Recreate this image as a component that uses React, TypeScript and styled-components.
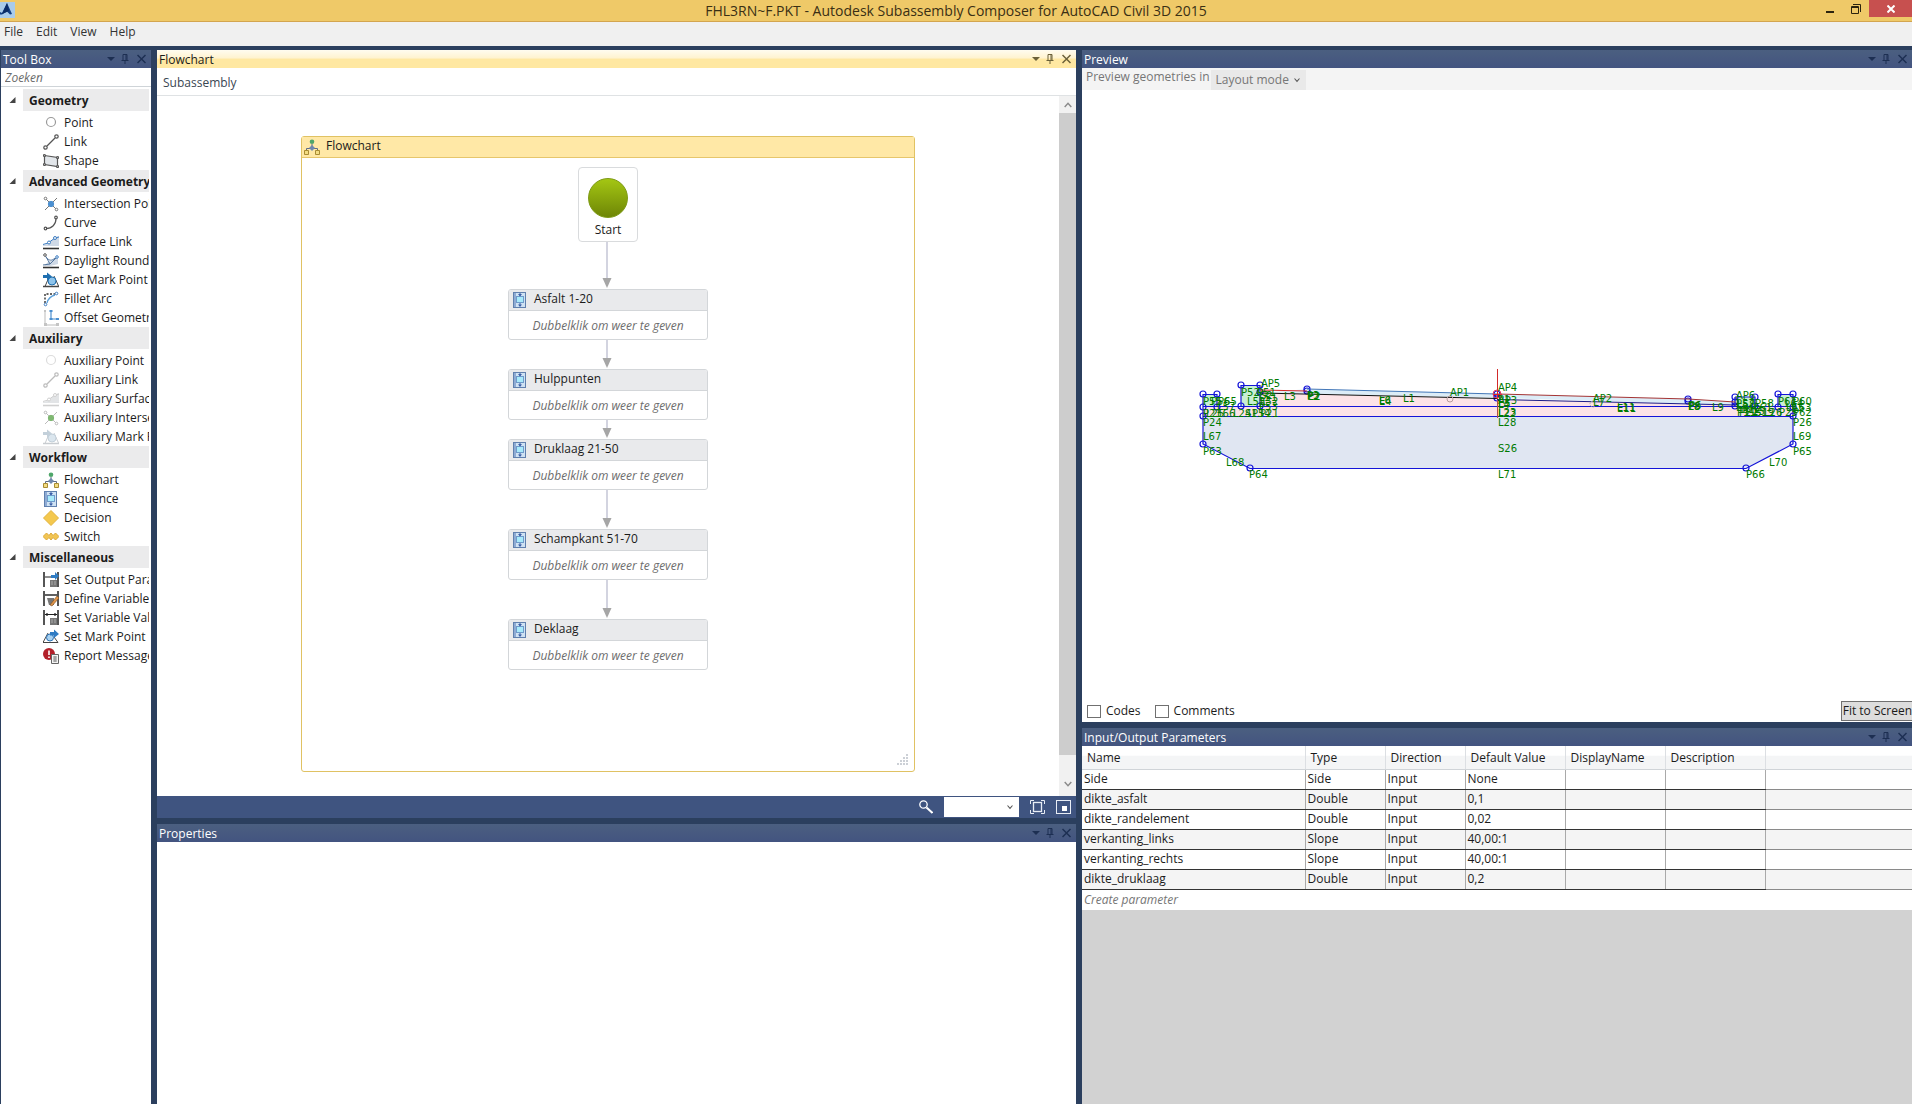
import React from "react";
import styled, { createGlobalStyle } from "styled-components";

const font = `"Open Sans", "Noto Sans", sans-serif`;

const GlobalStyle = createGlobalStyle`
  *, *::before, *::after { box-sizing: border-box; }
  body { margin: 0; background: #2b3f5e; font-family: ${font}; font-size: 12px; line-height: 16px; color: #1b1b1b; }
  button, input, select { font: inherit; color: inherit; margin: 0; }
  button { border: 0; padding: 0; background: none; text-align: left; }
  ul { list-style: none; margin: 0; padding: 0; }
  h1, h2, h3, p { margin: 0; font-weight: 400; font-size: inherit; }
`;

/* ---------- window frame ---------- */

const Window = styled.div`
  display: flex;
  flex-direction: column;
  height: 100vh;
  overflow: hidden;
`;

const TitleBar = styled.header`
  display: grid;
  grid-template-columns: 1fr auto 1fr;
  height: 22px;
  flex: none;
  background: #efc968;
  border-bottom: 1px solid #d3a54f;
`;

const Title = styled.h1`
  font-size: 14px;
  line-height: 21px;
  color: #3a2f14;
  white-space: nowrap;
`;

const WindowButtons = styled.div`
  display: flex;
  justify-content: flex-end;
`;

const WindowButton = styled.button<{ $close?: boolean }>`
  display: flex;
  align-items: center;
  justify-content: center;
  width: ${(p) => (p.$close ? 43 : 26)}px;
  height: 17px;
  background: ${(p) => (p.$close ? "#c7504f" : "transparent")};
`;

const MenuBar = styled.nav`
  display: flex;
  align-items: flex-start;
  gap: 13px;
  height: 24px;
  flex: none;
  padding: 2px 4px;
  background: #f0f0f0;
`;

const MenuItem = styled.button`
  color: #333;
`;

const Workspace = styled.main`
  flex: 1;
  min-height: 0;
  display: grid;
  grid-template-columns: 150px minmax(0, 919fr) minmax(0, 830fr);
  grid-template-rows: minmax(0, 1fr);
  gap: 6px;
  padding: 4px 0 0 1px;
  background: #2b3f5e;
`;

const Stack = styled.div`
  display: flex;
  flex-direction: column;
  gap: 6px;
  min-height: 0;
`;

const Panel = styled.section<{ $grow: number; $bg?: string }>`
  flex: ${(p) => p.$grow} 1 0;
  min-height: 0;
  min-width: 0;
  display: flex;
  flex-direction: column;
  background: ${(p) => p.$bg ?? "#fff"};
  overflow: hidden;
`;

const PanelHeader = styled.div<{ $active?: boolean }>`
  display: flex;
  align-items: center;
  height: 18px;
  flex: none;
  padding: 0 0 0 2px;
  color: ${(p) => (p.$active ? "#1b1b1b" : "#fff")};
  background: ${(p) =>
    p.$active
      ? "linear-gradient(#fffcf0 0%, #fff3cf 45%, #ffe8a2 50%, #ffe8a2 100%)"
      : "linear-gradient(#4b5f80, #435480)"};
`;

const PanelTitle = styled.h2`
  flex: 1;
  white-space: nowrap;
  padding-top: 2px;
`;

const PanelButton = styled.button<{ $wide?: boolean; $active?: boolean }>`
  display: flex;
  justify-content: center;
  width: ${(p) => (p.$wide ? 19 : 14)}px;
  color: ${(p) => (p.$active ? "#6b6038" : "#1d2f52")};
`;

function Header({ title, active }: { title: string; active?: boolean }) {
  return (
    <PanelHeader $active={active}>
      <PanelTitle>{title}</PanelTitle>
      <PanelButton $active={active} aria-label="Window position">
        <svg width="8" height="10" viewBox="0 0 8 10"><path d="M0 3h8L4 7z" fill="currentColor" /></svg>
      </PanelButton>
      <PanelButton $active={active} aria-label="Auto hide">
        <svg width="8" height="10" viewBox="0 0 8 10" fill="none" stroke="currentColor">
          <path d="M2 6V.5h4V6M0.500 6.500h7M4 6.500V10M5 1v5" />
        </svg>
      </PanelButton>
      <PanelButton $wide $active={active} aria-label="Close">
        <svg width="9" height="10" viewBox="0 0 9 10" fill="none" stroke="currentColor" strokeWidth="1.5">
          <path d="M.5 1l8 8M8.500 1l-8 8" />
        </svg>
      </PanelButton>
    </PanelHeader>
  );
}

const Chevron = ({ up, color = "#555", size = 8 }: { up?: boolean; color?: string; size?: number }) => (
  <svg width={size} height="6" viewBox="0 0 8 6" fill="none" stroke={color} strokeWidth="1.4">
    <path d={up ? "M.7 5L4 1.200 7.300 5" : "M.7 1L4 4.800 7.300 1"} />
  </svg>
);

/* ---------- icons ---------- */

const FlowIcon = () => (
  <>
    <path d="M8 5v3M2.500 12V9.500h11V12" stroke="#5d6c86" fill="none" />
    <circle cx="8" cy="2.700" r="2.300" fill="#4fa66a" />
    <path d="M8 6l3 3-3 3-3-3z" fill="#7088ae" />
    <path d="M.5 11.500h4v4h-4zM11.500 11.500h4v4h-4z" fill="#f3dc83" stroke="#a98c33" />
  </>
);

const SequenceIcon = () => (
  <>
    <rect x="1.500" y=".5" width="12" height="15" fill="#cfe2f3" stroke="#6080ae" />
    <path d="M2 1h2v14H2z" fill="#8fabd4" />
    <rect x="4.500" y="4.500" width="7" height="6" fill="#a9eafa" stroke="#6f9bcb" />
    <path d="M8 1v3M8 11v2" stroke="#3b5fa8" />
    <path d="M6 2h4L8 4.500zM6 12.500h4L8 15z" fill="#3b5fa8" />
  </>
);

const surface = (line: string, fill: string, base: string) => (
  <>
    <path d="M0 11l4-1 4-3 5-4 3-1v10H0z" fill={fill} />
    <path d="M0 14.500h16" stroke={base} strokeWidth="1.600" />
    <path d="M0 10.500L5 9l7-5 4-1" stroke={line} fill="none" />
    <circle cx="6" cy="8.500" r="1.500" fill="#fff" stroke={line} />
    <circle cx="12" cy="4" r="1.500" fill="#fff" stroke={line} />
  </>
);

const cross = (line: string, dot: string) => (
  <>
    <path d="M2 2l12 12M14 2L2 14" stroke={line} />
    <circle cx="2.500" cy="2.500" r="1.300" fill="#fff" stroke={line} />
    <circle cx="13.500" cy="13.500" r="1.300" fill="#fff" stroke={line} />
    <circle cx="8" cy="8" r="2.700" fill={dot} stroke={dot} />
  </>
);

const link = (c: string) => (
  <g stroke={c} fill="none" strokeWidth="1.200">
    <path d="M4 12l8-8" />
    <circle cx="2.500" cy="13.500" r="1.700" />
    <circle cx="13.500" cy="2.500" r="1.700" />
  </g>
);

const markPoint = (a: string, b: string, base: string) => (
  <>
    <path d="M2 14.500l3-7M11 4l4.500 10" stroke={base} />
    <circle cx="9" cy="9" r="4" fill={b} stroke={a} />
    <path d="M0 3h4V.5L9 4.500 4 8.500V6H0z" fill={a} />
    <path d="M0 14.500h16" stroke={base} strokeWidth="1.500" />
  </>
);

const bars = (
  <path d="M1 0v15M15 0v15" stroke="#1e1e1e" strokeWidth="1.500" />
);

const calc = (
  <>
    <path d="M7 8h7v7H7z" fill="#777" />
    <path d="M8.500 10h1M8.500 12h1M11.500 10h1M11.500 12h1" stroke="#ddd" />
  </>
);

const glyphs: Record<string, React.ReactNode> = {
  point: <circle cx="8" cy="7" r="4.500" fill="none" stroke="#9a9a9a" strokeWidth="1.200" />,
  link: link("#555"),
  shape: (
    <g stroke="#555" strokeWidth="1.200">
      <path d="M1.500 2.500l13 2v9l-13-2z" fill="#e2e6ea" />
      <circle cx="1.500" cy="2.500" r="1" fill="#fff" /><circle cx="14.500" cy="4.500" r="1" fill="#fff" />
      <circle cx="14.500" cy="13.500" r="1" fill="#fff" /><circle cx="1.500" cy="11.500" r="1" fill="#fff" />
    </g>
  ),
  intersection: cross("#777", "#4b8fd0"),
  curve: (
    <g stroke="#555" fill="none" strokeWidth="1.200">
      <path d="M3 13.500c6 0 10-4 10-10" /><circle cx="2.500" cy="13.500" r="1.300" /><circle cx="13" cy="2.500" r="1.300" />
    </g>
  ),
  surface: surface("#3d7dc2", "#cfd9e6", "#333"),
  daylight: (
    <>
      <path d="M5 9l10-5v7l-8 2H1z" fill="#cfd9e6" />
      <path d="M0 14.500h16" stroke="#333" strokeWidth="1.600" />
      <path d="M2 2l5 9 8-8M3 4c3 4 6 4 9 1M0 12l7-1" stroke="#54769e" fill="none" />
      <circle cx="2" cy="2" r="1.300" fill="#fff" stroke="#555" /><circle cx="14" cy="4" r="1.300" fill="#fff" stroke="#3d7dc2" />
    </>
  ),
  getmark: markPoint("#1e6fb0", "#8ec3ea", "#444"),
  fillet: (
    <>
      <path d="M2 12V3h10" stroke="#333" strokeDasharray="2 1.500" fill="none" strokeWidth="1.400" />
      <path d="M4 12c1-4 4-7 8-8" stroke="#5aa0dc" fill="none" strokeWidth="1.300" />
      <circle cx="2.500" cy="13.500" r="1.300" fill="#fff" stroke="#3d7dc2" /><circle cx="13.500" cy="2.500" r="1.300" fill="#fff" stroke="#3d7dc2" />
    </>
  ),
  offset: (
    <>
      <path d="M2 1v14h13" stroke="#bbb" fill="none" />
      <path d="M8 1v8h7" stroke="#4b8fd0" fill="none" strokeWidth="1.200" />
      <path d="M6.500 0h3v2h-3zM6.500 8h3v2h-3zM13 8h3v2h-3z" fill="#4b8fd0" />
      <path d="M1 0h2v2H1zM1 13h3v3H1zM13 13h3v3h-3z" fill="#c4c4c4" />
    </>
  ),
  auxpoint: <circle cx="8" cy="7" r="4.500" fill="none" stroke="#dcdcdc" strokeWidth="1.200" />,
  auxlink: link("#bcbcbc"),
  auxsurface: surface("#cfcfcf", "#e2e4e6", "#d0d0d0"),
  auxcross: cross("#bbb", "#7fb872"),
  auxmark: markPoint("#c3d0da", "#dbe6ee", "#c8ccd0"),
  flow: <FlowIcon />,
  sequence: <SequenceIcon />,
  decision: <path d="M8 .5L15.500 8 8 15.500.5 8z" fill="#f4c84e" stroke="#e2b23c" />,
  switch: (
    <path d="M0 7.500L3.500 4 6 6.500 8 4l2 2.500L12.500 4 16 7.500 12.500 11 10 8.500 8 11 6 8.500 3.500 11z" fill="#f2c553" stroke="#dba93a" />
  ),
  setoutput: (
    <>{bars}{calc}<path d="M2 5h7" stroke="#1e1e1e" /><path d="M8 3h4V0l4 4-4 4V6H8z" fill="#2f7cc4" /></>
  ),
  define: (
    <>{bars}<path d="M2 4h12" stroke="#1e1e1e" strokeWidth="1.400" /><path d="M4 7h7v7H6z" fill="#777" /><path d="M7 14l7-9 2 2-7 8z" fill="#e0954b" stroke="#7a4d1e" strokeWidth=".6" /></>
  ),
  setvalue: (
    <>{bars}{calc}<path d="M2 4.500h12M4 3v3M12 3v3" stroke="#1e1e1e" strokeWidth="1.200" /></>
  ),
  setmark: (
    <>
      <path d="M0 13.500L5 4M11 8l4 5.500H0" stroke="#444" fill="none" />
      <circle cx="7" cy="8.500" r="3.500" fill="#a8d2f2" stroke="#2a70b4" />
      <path d="M7 3h4V.5L16 5l-5 4V6.500H7z" fill="#2f7cc4" />
    </>
  ),
  report: (
    <>
      <circle cx="6" cy="6" r="6" fill="#b3202a" />
      <path d="M6 2.500v4.500M6 8.500v1.500" stroke="#fff" strokeWidth="1.600" />
      <path d="M8.500 6.500h7v9h-7z" fill="#f4f4f4" stroke="#666" />
      <path d="M10 9h4M10 11h4M10 13h4M12 8v6" stroke="#888" />
    </>
  ),
};

const Icon = styled.svg.attrs({ width: 16, height: 16, viewBox: "0 0 16 16" })`
  flex: none;
  display: block;
`;

/* ---------- tool box ---------- */

const SearchInput = styled.input`
  width: 100%;
  height: 19px;
  flex: none;
  padding: 1px 4px 0;
  border: 0;
  border-bottom: 1px solid #cfd4d8;
  outline: 0;
  font-style: italic;
  &::placeholder { color: #6b6b6b; opacity: 1; }
`;

const Tree = styled.div`
  padding: 2px 2px 0 8px;
  overflow: hidden;
`;

const GroupHeader = styled.button`
  display: flex;
  align-items: center;
  width: 100%;
  height: 22px;
`;

const GroupArrow = styled.svg`
  flex: none;
  width: 14px;
  height: 8px;
`;

const GroupTitle = styled.span`
  flex: 1;
  min-width: 0;
  height: 22px;
  padding: 4px 0 0 6px;
  background: #ebebec;
  font-weight: 700;
  white-space: nowrap;
  overflow: hidden;
`;

const ToolList = styled.ul`
  padding: 2px 0 0 34px;
`;

const Tool = styled.button`
  display: flex;
  align-items: center;
  gap: 5px;
  width: 100%;
  height: 19px;
  overflow: hidden;
  white-space: nowrap;
`;

const groups: [string, [string, string][]][] = [
  ["Geometry", [["point", "Point"], ["link", "Link"], ["shape", "Shape"]]],
  ["Advanced Geometry", [
    ["intersection", "Intersection Point"], ["curve", "Curve"], ["surface", "Surface Link"],
    ["daylight", "Daylight Rounding"], ["getmark", "Get Mark Point"], ["fillet", "Fillet Arc"], ["offset", "Offset Geometry"],
  ]],
  ["Auxiliary", [
    ["auxpoint", "Auxiliary Point"], ["auxlink", "Auxiliary Link"], ["auxsurface", "Auxiliary Surface Link"],
    ["auxcross", "Auxiliary Intersection"], ["auxmark", "Auxiliary Mark Point"],
  ]],
  ["Workflow", [["flow", "Flowchart"], ["sequence", "Sequence"], ["decision", "Decision"], ["switch", "Switch"]]],
  ["Miscellaneous", [
    ["setoutput", "Set Output Parameter"], ["define", "Define Variable"], ["setvalue", "Set Variable Value"],
    ["setmark", "Set Mark Point"], ["report", "Report Message"],
  ]],
];

function ToolBox() {
  return (
    <Panel $grow={1}>
      <Header title="Tool Box" />
      <SearchInput type="text" placeholder="Zoeken" aria-label="Zoeken" />
      <Tree>
        {groups.map(([name, tools]) => (
          <div key={name}>
            <GroupHeader aria-expanded="true">
              <GroupArrow viewBox="0 0 14 8"><path d="M6.500 1v6h-6z" fill="#444" /></GroupArrow>
              <GroupTitle>{name}</GroupTitle>
            </GroupHeader>
            <ToolList>
              {tools.map(([icon, label]) => (
                <li key={label}>
                  <Tool><Icon>{glyphs[icon]}</Icon>{label}</Tool>
                </li>
              ))}
            </ToolList>
          </div>
        ))}
      </Tree>
    </Panel>
  );
}

/* ---------- flowchart designer ---------- */

const Breadcrumb = styled.div`
  height: 28px;
  flex: none;
  padding: 7px 6px 0;
  border-bottom: 1px solid #dfe2e4;
`;

const Crumb = styled.button`
  display: block;
  color: #3a4652;
`;

const Designer = styled.div`
  flex: 1;
  min-height: 0;
  display: flex;
`;

const Canvas = styled.div`
  flex: 1;
  min-width: 0;
  display: flex;
  justify-content: center;
  align-items: flex-start;
  padding-top: 40px;
  overflow: hidden;
`;

const ScrollBar = styled.div`
  display: flex;
  flex-direction: column;
  width: 17px;
  background: #cdcdcd;
`;

const ScrollButton = styled.button<{ $end?: boolean }>`
  display: flex;
  align-items: center;
  justify-content: center;
  height: ${(p) => (p.$end ? 41 : 17)}px;
  padding-top: ${(p) => (p.$end ? 16 : 0)}px;
  margin-top: ${(p) => (p.$end ? "auto" : "0")};
  background: #f1f1f1;
`;

const Chart = styled.div`
  flex: none;
  width: 614px;
  border: 1px solid #e0c263;
  border-radius: 3px;
`;

const ChartHeader = styled.div`
  display: flex;
  align-items: center;
  gap: 6px;
  height: 21px;
  padding: 0 2px;
  border-bottom: 1px solid #e6c66c;
  background: #ffe8a6;
`;

const ChartTitle = styled.h3`
  padding-bottom: 2px;
`;

const Diagram = styled.div`
  position: relative;
  height: 613px;
`;

const Connectors = styled.svg`
  position: absolute;
  inset: 0;
  width: 100%;
  height: 100%;
`;

const StartNode = styled.div`
  position: absolute;
  left: 276px;
  top: 9px;
  display: flex;
  flex-direction: column;
  align-items: center;
  gap: 4px;
  width: 60px;
  height: 75px;
  padding-top: 10px;
  border: 1px solid #d9dbdd;
  border-radius: 4px;
  background: #fff;
`;

const StartDisc = styled.div`
  width: 40px;
  height: 40px;
  border-radius: 50%;
  border: 1px solid #7d9a14;
  background: linear-gradient(#a4c613, #6e8606);
`;

const ActivityBox = styled.article`
  position: absolute;
  left: 206px;
  width: 200px;
  height: 51px;
  border: 1px solid #d3d6d9;
  border-radius: 3px;
  background: #fff;
  overflow: hidden;
`;

const ActivityHead = styled.div`
  display: flex;
  align-items: center;
  gap: 6px;
  height: 21px;
  padding: 0 3px;
  border-bottom: 1px solid #d3d6d9;
  background: #e9eaec;
`;

const ActivityHint = styled.p`
  padding-top: 7px;
  text-align: center;
  font-style: italic;
  color: #6d6d6d;
`;

const Grip = styled.svg`
  position: absolute;
  right: 5px;
  bottom: 5px;
`;

const StatusBar = styled.div`
  display: flex;
  align-items: center;
  justify-content: flex-end;
  gap: 11px;
  height: 22px;
  flex: none;
  padding-right: 5px;
  background: #3f5480;
`;

const ToolButton = styled.button`
  display: flex;
`;

const SelectWrap = styled.label<{ $w: number; $bg: string; $color?: string }>`
  display: grid;
  grid-template-columns: 1fr 8px;
  align-items: center;
  width: ${(p) => p.$w}px;
  height: 20px;
  padding: 0 4px 0 5px;
  background: ${(p) => p.$bg};
  color: ${(p) => p.$color ?? "#1b1b1b"};
`;

const Select = styled.select`
  appearance: none;
  min-width: 0;
  height: 20px;
  border: 0;
  padding: 0;
  background: transparent;
  outline: 0;
`;

const activities: [string, number][] = [
  ["Asfalt 1-20", 131], ["Hulppunten", 211], ["Druklaag 21-50", 281], ["Schampkant 51-70", 371], ["Deklaag", 461],
];

const nodeHeight = 51;

function FlowchartPanel() {
  return (
    <Panel $grow={768}>
      <Header title="Flowchart" active />
      <Breadcrumb><Crumb>Subassembly</Crumb></Breadcrumb>
      <Designer>
        <Canvas>
          <Chart>
            <ChartHeader><Icon><FlowIcon /></Icon><ChartTitle>Flowchart</ChartTitle></ChartHeader>
            <Diagram>
              <Connectors>
                {activities.map(([name, y], i) => {
                  const from = i === 0 ? 84 : activities[i - 1][1] + nodeHeight;
                  return (
                    <g key={name}>
                      <path d={`M305 ${from}V${y - 8}`} stroke="#d3d4e0" strokeWidth="2" />
                      <path d={`M300.500 ${y - 11}h9l-4.500 10z`} fill="#a6a6a6" />
                    </g>
                  );
                })}
              </Connectors>
              <StartNode><StartDisc />Start</StartNode>
              {activities.map(([name, y]) => (
                <ActivityBox key={name} style={{ top: y }}>
                  <ActivityHead><Icon><SequenceIcon /></Icon><ChartTitle>{name}</ChartTitle></ActivityHead>
                  <ActivityHint>Dubbelklik om weer te geven</ActivityHint>
                </ActivityBox>
              ))}
              <Grip width="12" height="12" viewBox="0 0 12 12" fill="#ccd0d6">
                <path d="M9 0h2v2H9zM6 3h2v2H6zM9 3h2v2H9zM3 6h2v2H3zM6 6h2v2H6zM9 6h2v2H9zM0 9h2v2H0zM3 9h2v2H3zM6 9h2v2H6zM9 9h2v2H9z" />
              </Grip>
            </Diagram>
          </Chart>
        </Canvas>
        <ScrollBar>
          <ScrollButton aria-label="Scroll up"><Chevron up color="#8a8a8a" /></ScrollButton>
          <ScrollButton $end aria-label="Scroll down"><Chevron color="#8a8a8a" /></ScrollButton>
        </ScrollBar>
      </Designer>
      <StatusBar>
        <ToolButton aria-label="Zoom">
          <svg width="14" height="14" viewBox="0 0 14 14" fill="none" stroke="#fff">
            <circle cx="4.500" cy="4.500" r="3.700" strokeWidth="1.300" /><path d="M7.500 7.500l6 5.500" strokeWidth="2" />
          </svg>
        </ToolButton>
        <SelectWrap $w={75} $bg="#fff"><Select aria-label="Zoom level" defaultValue=""><option value="" /></Select><Chevron size={6} /></SelectWrap>
        <ToolButton aria-label="Fit to screen">
          <svg width="15" height="14" viewBox="0 0 15 14" fill="none" stroke="#e8edf5">
            <path d="M.5 4V.5H4M11 .5h3.500V4M14.500 10v3.500H11M4 13.500H.5V10" /><rect x="3.500" y="2.500" width="8" height="9" strokeWidth="1.300" />
          </svg>
        </ToolButton>
        <ToolButton aria-label="Overview">
          <svg width="15" height="14" viewBox="0 0 15 14">
            <rect x=".5" y=".5" width="14" height="13" fill="none" stroke="#e8edf5" /><path d="M6 6h5v5H6z" fill="#fff" />
          </svg>
        </ToolButton>
      </StatusBar>
    </Panel>
  );
}

/* ---------- preview ---------- */

const PreviewBar = styled.div`
  display: flex;
  align-items: flex-end;
  gap: 1px;
  height: 22px;
  flex: none;
  padding: 0 4px;
  background: #f4f4f4;
  color: #767676;
`;

const PreviewCaption = styled.span`
  padding-bottom: 5px;
`;

const PreviewFooter = styled.div`
  display: flex;
  align-items: center;
  gap: 14px;
  height: 22px;
  flex: none;
  padding-left: 5px;
`;

const CheckLabel = styled.label`
  display: flex;
  align-items: center;
  gap: 5px;
`;

const CheckBox = styled.input`
  appearance: none;
  width: 14px;
  height: 13px;
  border: 1px solid #707070;
  background: #fff;
`;

const FitButton = styled.button`
  height: 20px;
  margin-left: auto;
  padding: 0 0 0 1px;
  border: 1px solid #707070;
  border-right: 0;
  background: #dddddd;
  white-space: nowrap;
`;

const Drawing = styled.svg`
  flex: 1;
  min-height: 0;
  width: 100%;
  display: block;
  font-family: "DejaVu Sans", sans-serif;
  font-size: 10px;
`;

/* Label text with its anchor in drawing units. */
const labels: [string, number, number][] = [
  ["AP5", 1261, 387], ["P52", 1241, 396], ["P51", 1257, 396], ["L51", 1259, 401], ["S2", 1260, 399],
  ["L53", 1247, 405], ["L52", 1260, 405], ["P53", 1259, 410],
  ["P55", 1203, 405], ["P56", 1211, 405], ["P65", 1218, 405], ["L57", 1217, 410],
  ["P23", 1203, 417], ["L25", 1206, 417], ["L66", 1217, 417], ["L24", 1233, 417], ["S13", 1245, 417], ["P54", 1252, 417], ["P21", 1260, 417],
  ["P24", 1203, 426], ["L67", 1203, 440], ["P63", 1203, 455], ["L68", 1226, 466], ["P64", 1249, 478],
  ["L3", 1284, 400], ["P2", 1307, 400], ["E2", 1308, 400], ["P3", 1307, 399], ["E4", 1379, 405], ["L6", 1379, 404], ["L1", 1403, 402], ["AP1", 1450, 396],
  ["AP4", 1498, 391], ["AP3", 1498, 404], ["P1", 1498, 403], ["L4", 1498, 408], ["E5", 1498, 407], ["L22", 1498, 417], ["L23", 1498, 416], ["L28", 1498, 426], ["S26", 1498, 452], ["L71", 1498, 478],
  ["AP2", 1593, 402], ["L7", 1593, 406], ["E11", 1617, 412], ["L11", 1617, 411],
  ["P8", 1688, 410], ["E8", 1688, 410], ["P6", 1689, 409], ["L9", 1712, 411],
  ["AP6", 1736, 399], ["P57", 1736, 407], ["L58", 1737, 408], ["P58", 1755, 407], ["L61", 1754, 411], ["E9", 1736, 411], ["S12", 1742, 413], ["P11", 1737, 416], ["P22", 1739, 416], ["S19", 1755, 416], ["L26", 1764, 416], ["P15", 1746, 415],
  ["P61", 1778, 405], ["P60", 1793, 405], ["L64", 1785, 407], ["P25", 1779, 416], ["L65", 1786, 411], ["P62", 1793, 416], ["L63", 1793, 411],
  ["P26", 1793, 426], ["L69", 1793, 440], ["P65", 1793, 455], ["L70", 1769, 466], ["P66", 1746, 478],
];

const nodes: [number, number][] = [
  [1203, 394], [1217, 394], [1203, 407], [1217, 407], [1203, 416], [1203, 444], [1250, 468],
  [1241, 385], [1260, 385], [1241, 406], [1260, 406], [1260, 392], [1307, 389], [1307, 391],
  [1497, 394], [1497, 398], [1688, 399], [1688, 401], [1735, 397], [1755, 397], [1735, 402], [1735, 406], [1755, 406],
  [1778, 394], [1793, 394], [1778, 407], [1793, 407], [1793, 416], [1793, 444], [1746, 468],
];

function PreviewPanel() {
  return (
    <Panel $grow={672}>
      <Header title="Preview" />
      <PreviewBar>
        <PreviewCaption>Preview geometries in</PreviewCaption>
        <SelectWrap $w={95} $bg="#e9e9e9" $color="#767676">
          <Select aria-label="Preview geometries in" defaultValue="Layout mode"><option>Layout mode</option></Select>
          <Chevron size={6} />
        </SelectWrap>
      </PreviewBar>
      <Drawing viewBox="1082 90 830 610" role="img" aria-label="Subassembly cross section">
        <path d="M1203 416H1793V444L1746 468H1250L1203 444z" fill="#e0e6f2" />
        <path d="M1203 407H1260V393L1497 399 1735 405V407H1793V416H1203z" fill="#fde3e7" />
        <path d="M1307 389L1497 394 1688 399 1735 402V405L1497 398 1260 393z" fill="#dcecf7" />
        <path d="M1241 385h19v21h-19zM1203 394h14v13h-14zM1735 397h20v9h-20zM1778 394h15v13h-15z" fill="#c9efd4" />
        <g fill="none" stroke="#1414d8" strokeWidth="1.200">
          <path d="M1203 394.500h14M1241 385.500h19M1241 385v21M1260 385v21M1203 394v13M1217 394v13" />
          <path d="M1735 397h20v9.500M1735 397v9M1778 407v-12.500h15V407M1203 406.500h590M1203 416.500h590" />
          <path d="M1203 407v37l47 24.500h496l47-24.500V407" />
          {nodes.map(([x, y], i) => <circle key={i} cx={x} cy={y} r="3" />)}
        </g>
        <g fill="none">
          <path d="M1307 389l190 5" stroke="#4377b8" />
          <path d="M1260 390l47 1M1497.500 369v33" stroke="#d22a2a" />
          <path d="M1498 394l190 5 47 3" stroke="#a43434" />
          <path d="M1260 393l237 5.500" stroke="#111" />
          <path d="M1497 399.500l238 5.500" stroke="#1b1b88" />
          <path d="M1493 394.500h9M1497.500 390v9" stroke="#e02020" />
          <circle cx="1497" cy="394" r="4" stroke="#e03a5a" />
          <circle cx="1450" cy="399" r="3" stroke="#b79b9b" />
          <circle cx="1593" cy="404" r="3" stroke="#b7b0b8" strokeDasharray="2 1" />
          <path d="M1497.500 400v18" stroke="#b05050" />
        </g>
        <g fill="#007a00">
          {labels.map(([t, x, y], i) => <text key={i} x={x} y={y}>{t}</text>)}
        </g>
      </Drawing>
      <PreviewFooter>
        <CheckLabel><CheckBox type="checkbox" />Codes</CheckLabel>
        <CheckLabel><CheckBox type="checkbox" />Comments</CheckLabel>
        <FitButton>Fit to Screen</FitButton>
      </PreviewFooter>
    </Panel>
  );
}

/* ---------- parameters ---------- */

const Table = styled.table`
  width: 100%;
  table-layout: fixed;
  border-collapse: collapse;
  background: #fff;
`;

const HeadCell = styled.th`
  height: 23px;
  padding: 1px 0 0 5px;
  border-right: 1px solid #dcdfe3;
  border-bottom: 1px solid #d0d4d8;
  background: linear-gradient(#fff 40%, #f4f5f6 45%, #f4f5f6);
  font-weight: 400;
  text-align: left;
  &:last-child { border-right: 0; }
`;

const Row = styled.tr`
  &:nth-child(even) { background: #f4f4f4; }
`;

const Cell = styled.td`
  height: 20px;
  padding: 0 0 1px 2px;
  border-right: 1px solid #a9a9a9;
  border-bottom: 1px solid #333;
  white-space: nowrap;
  &:last-child { border-right: 0; border-bottom-color: #8a8a8a; }
`;

const CreateRow = styled.button`
  height: 20px;
  flex: none;
  padding: 0 2px;
  background: #fff;
  font-style: italic;
  color: #767676;
`;

const columns = [["Name", 223], ["Type", 80], ["Direction", 80], ["Default Value", 100], ["DisplayName", 100], ["Description", 100]] as const;

const rows = [
  ["Side", "Side", "Input", "None"],
  ["dikte_asfalt", "Double", "Input", "0,1"],
  ["dikte_randelement", "Double", "Input", "0,02"],
  ["verkanting_links", "Slope", "Input", "40,00:1"],
  ["verkanting_rechts", "Slope", "Input", "40,00:1"],
  ["dikte_druklaag", "Double", "Input", "0,2"],
];

function ParametersPanel() {
  return (
    <Panel $grow={376} $bg="#d2d2d2">
      <Header title="Input/Output Parameters" />
      <Table>
        <colgroup>
          {columns.map(([name, w]) => <col key={name} width={w} />)}
          <col />
        </colgroup>
        <thead>
          <tr>{columns.map(([name]) => <HeadCell key={name} scope="col">{name}</HeadCell>)}<HeadCell as="td" /></tr>
        </thead>
        <tbody>
          {rows.map((r) => (
            <Row key={r[0]}>{[...r, "", "", ""].map((c, i) => <Cell key={i}>{c}</Cell>)}</Row>
          ))}
        </tbody>
      </Table>
      <CreateRow>Create parameter</CreateRow>
    </Panel>
  );
}

export default function App() {
  return (
    <Window>
      <GlobalStyle />
      <TitleBar>
        <svg width="15" height="18" viewBox="0 0 15 18">
          <rect y="2" width="15" height="16" fill="#a9cbea" />
          <path d="M7 3l5 11-2 .5-3-3-5 3H0V12l2 1z" fill="#123f85" />
          <path d="M7 3l2 8-7 3z" fill="#0b2c66" />
        </svg>
        <Title>FHL3RN~F.PKT - Autodesk Subassembly Composer for AutoCAD Civil 3D 2015</Title>
        <WindowButtons>
          <WindowButton aria-label="Minimize"><svg width="8" height="10" viewBox="0 0 8 10"><path d="M0 7h8v2H0z" fill="#2c240f" /></svg></WindowButton>
          <WindowButton aria-label="Restore">
            <svg width="10" height="10" viewBox="0 0 10 10" fill="none" stroke="#2c240f"><path d="M2 .5h7.500V8M.5 2.500h7v7h-7zM.5 3.500h7" /></svg>
          </WindowButton>
          <WindowButton $close aria-label="Close">
            <svg width="8" height="8" viewBox="0 0 8 8" stroke="#fff" strokeWidth="2"><path d="M.5.5l7 7M7.500.5l-7 7" /></svg>
          </WindowButton>
        </WindowButtons>
      </TitleBar>
      <MenuBar>
        {["File", "Edit", "View", "Help"].map((m) => <MenuItem key={m}>{m}</MenuItem>)}
      </MenuBar>
      <Workspace>
        <Stack><ToolBox /></Stack>
        <Stack>
          <FlowchartPanel />
          <Panel $grow={280}><Header title="Properties" /></Panel>
        </Stack>
        <Stack>
          <PreviewPanel />
          <ParametersPanel />
        </Stack>
      </Workspace>
    </Window>
  );
}
